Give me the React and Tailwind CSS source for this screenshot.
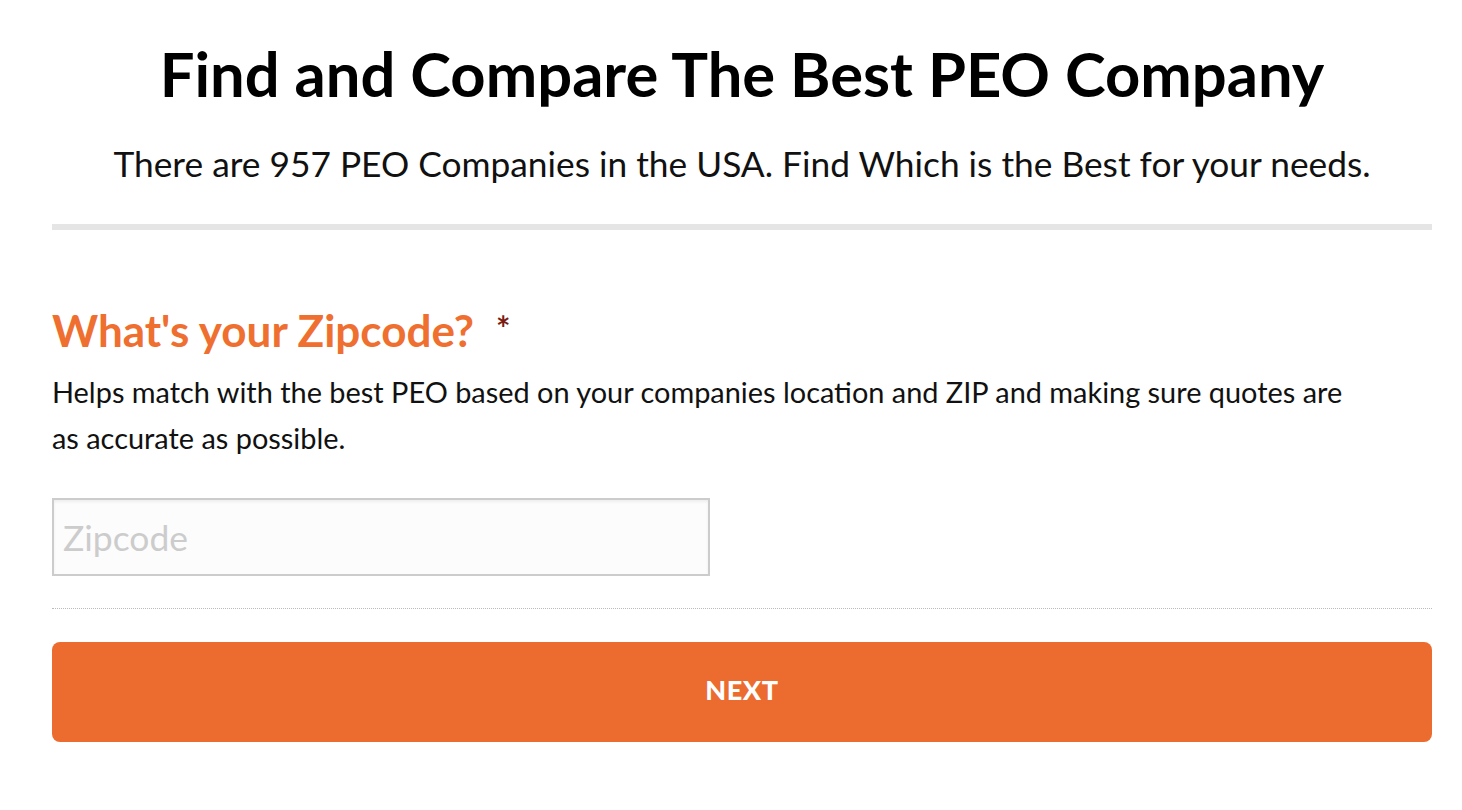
export default function App() {
  return (
    <div className="min-h-[810px] bg-white pl-[52px] pr-[30px] pt-[37px] font-['Lato',sans-serif] text-[#111]">
      <h1 className="text-center text-[61.5px] font-bold leading-[72px] text-black">
        Find and Compare The Best PEO Company
      </h1>
      <p className="mt-[34px] text-center text-[35.3px] leading-[42px] text-[#111]">
        There are 957 PEO Companies in the USA. Find Which is the Best for your needs.
      </p>
      <div className="mt-[39px] h-[6px] bg-[#e5e5e5]" />
      <div className="mt-[74px] flex items-start">
        <h2 className="text-[44px] font-bold leading-[52px] text-[#ef6f30]">What's your Zipcode?</h2>
        <span className="ml-[22px] mt-[2px] text-[34px] font-bold leading-[44px] text-[#7a1c12]">*</span>
      </div>
      <p className="mt-[13px] max-w-[1310px] text-[28.9px] leading-[46px] text-[#111]">
        Helps match with the best PEO based on your companies location and ZIP and making sure quotes are as accurate as possible.
      </p>
      <input
        type="text"
        placeholder="Zipcode"
        className="mt-[37px] block h-[78px] w-[658px] border-2 border-[#cccccc] bg-[#fcfcfc] px-[9px] text-[35.5px] shadow-[inset_0_2px_3px_rgba(0,0,0,0.06)] outline-none placeholder:text-[#cccccc]"
      />
      <div className="mt-[32px] border-t border-dotted border-[#bbbbbb]" />
      <button className="mt-[33px] flex h-[100px] w-full items-center justify-center rounded-[8px] bg-[#ec6b2f] pb-[4px] text-[27px] font-black tracking-[0.6px] text-white">
        NEXT
      </button>
    </div>
  );
}
